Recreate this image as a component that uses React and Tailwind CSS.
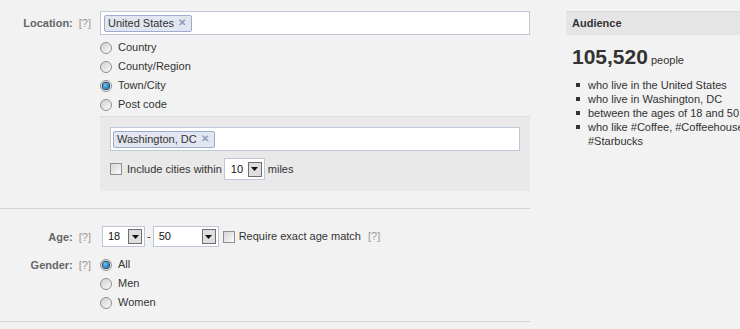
import React from "react";

const font = { fontFamily: '"Liberation Sans", Arial, sans-serif' };

function Radio({ checked }) {
  return (
    <span className="relative inline-flex h-[12px] w-[12px] shrink-0 items-center justify-center rounded-full border border-[#8f8f8f] bg-gradient-to-br from-[#d0d0d0] to-[#fbfbfb]">
      {checked && (
        <span className="h-[6px] w-[6px] rounded-full bg-[radial-gradient(circle_at_35%_35%,#6fc6f5,#0a5a9c)] shadow-[0_0_0_1px_#0d3d66]" />
      )}
    </span>
  );
}

function Checkbox() {
  return (
    <span className="inline-block h-[12px] w-[12px] shrink-0 border border-[#8e8f8f] bg-gradient-to-br from-[#d6d6d6] to-[#fafafa]" />
  );
}

function Tag({ children }) {
  return (
    <span className="inline-flex h-[17px] items-center gap-[4px] rounded-[2px] border border-[#9dacce] bg-[#e2e6f0] pl-[3px] pr-[5px] text-[11px] text-[#333]">
      {children}
      <span className="text-[10px] font-bold leading-none text-[#8c9bbb]">✕</span>
    </span>
  );
}

function Arrow() {
  return (
    <span className="flex h-[15px] w-[14px] items-center justify-center border border-[#6e6e6e] bg-[#dedede]">
      <svg width="7" height="4" viewBox="0 0 7 4">
        <path d="M0 0h7L3.5 4z" fill="#111" />
      </svg>
    </span>
  );
}

function Select({ value, width }) {
  return (
    <span
      className={`flex h-[21px] items-center justify-between border border-[#bdc7d8] bg-white pl-[5px] pr-[2px] text-[11px] text-[#111] ${width}`}
    >
      <span>{value}</span>
      <Arrow />
    </span>
  );
}

function Label({ text, top }) {
  return (
    <div className={`flex w-[100px] shrink-0 justify-end gap-[6px] pr-[9px] ${top}`}>
      <span className="text-[11px] font-bold text-[#666]">{text}</span>
      <span className="text-[11px] text-[#999]">[?]</span>
    </div>
  );
}

export default function App() {
  return (
    <div className="flex h-[329px] w-[740px] overflow-hidden bg-[#f2f2f2]" style={font}>
      <div className="flex w-[530px] shrink-0 flex-col">
        {/* Location */}
        <div className="flex pt-[11px]">
          <Label text="Location:" top="pt-[4px]" />
          <div className="flex flex-1 flex-col">
            <div className="flex h-[24px] items-center border border-[#bdc7d8] bg-white px-[3px]">
              <Tag>United States</Tag>
            </div>
            <div className="mt-[3px] flex flex-col">
              {["Country", "County/Region", "Town/City", "Post code"].map((t) => (
                <div key={t} className="flex h-[19px] items-center gap-[6px] text-[11px] text-[#333]">
                  <Radio checked={t === "Town/City"} />
                  <span>{t}</span>
                </div>
              ))}
            </div>
            <div className="mt-[2px] flex h-[75px] flex-col border-t border-[#dcdcdc] bg-[#e9e9e9] px-[10px] pt-[10px]">
              <div className="flex h-[24px] items-center border border-[#bdc7d8] bg-white px-[2px]">
                <Tag>Washington, DC</Tag>
              </div>
              <div className="mt-[7px] flex items-center text-[11px] text-[#333]">
                <Checkbox />
                <span className="ml-[5px]">Include cities within</span>
                <span className="ml-[2px] flex h-[22px] w-[41px] items-center justify-between border border-[#bdc7d8] bg-white pl-[6px] pr-[2px] text-[#111]">
                  <span>10</span>
                  <Arrow />
                </span>
                <span className="ml-[3px]">miles</span>
              </div>
            </div>
          </div>
        </div>
        <div className="mt-[17px] h-[1px] w-full bg-[#d2d2d2]" />
        {/* Age */}
        <div className="mt-[17px] flex">
          <Label text="Age:" top="pt-[3px]" />
          <div className="ml-[2px] flex items-center text-[11px] text-[#333]">
            <Select value="18" width="w-[43px]" />
            <span className="mx-[2px]">-</span>
            <Select value="50" width="w-[66px]" />
            <span className="ml-[4px] flex"><Checkbox /></span>
            <span className="ml-[4px]">Require exact age match</span>
            <span className="ml-[7px] text-[#999]">[?]</span>
          </div>
        </div>
        {/* Gender */}
        <div className="mt-[8px] flex">
          <Label text="Gender:" top="pt-[2px]" />
          <div className="flex flex-col">
            {["All", "Men", "Women"].map((t) => (
              <div key={t} className="flex h-[19px] items-center gap-[6px] text-[11px] text-[#333]">
                <Radio checked={t === "All"} />
                <span>{t}</span>
              </div>
            ))}
          </div>
        </div>
        <div className="mt-[9px] h-[1px] w-full bg-[#d2d2d2]" />
      </div>
      {/* Audience */}
      <div className="ml-[36px] flex min-w-0 flex-1 flex-col overflow-hidden pt-[11px]">
        <div className="flex h-[24px] items-center border-t border-[#d9d9d9] bg-[#e5e5e5] pl-[6px] text-[11px] font-bold text-[#333]">
          Audience
        </div>
        <div className="mt-[10px] flex items-baseline pl-[6px] text-[#333]">
          <span className="text-[21px] font-bold leading-[24px]">105,520</span>
          <span className="ml-[3px] text-[11px]">people</span>
        </div>
        <ul className="mt-[9px] flex flex-col pl-[10px] text-[11px] leading-[14px] text-[#333]">
          {[
            "who live in the United States",
            "who live in Washington, DC",
            "between the ages of 18 and 50",
          ].map((t) => (
            <li key={t} className="flex items-start whitespace-nowrap">
              <span className="mr-[8px] mt-[5px] h-[4px] w-[4px] shrink-0 bg-[#333]" />
              {t}
            </li>
          ))}
          <li className="flex items-start whitespace-nowrap">
            <span className="mr-[8px] mt-[5px] h-[4px] w-[4px] shrink-0 bg-[#333]" />
            <span>
              who like #Coffee, #Coffeehouse,
              <br />
              #Starbucks
            </span>
          </li>
        </ul>
      </div>
    </div>
  );
}
